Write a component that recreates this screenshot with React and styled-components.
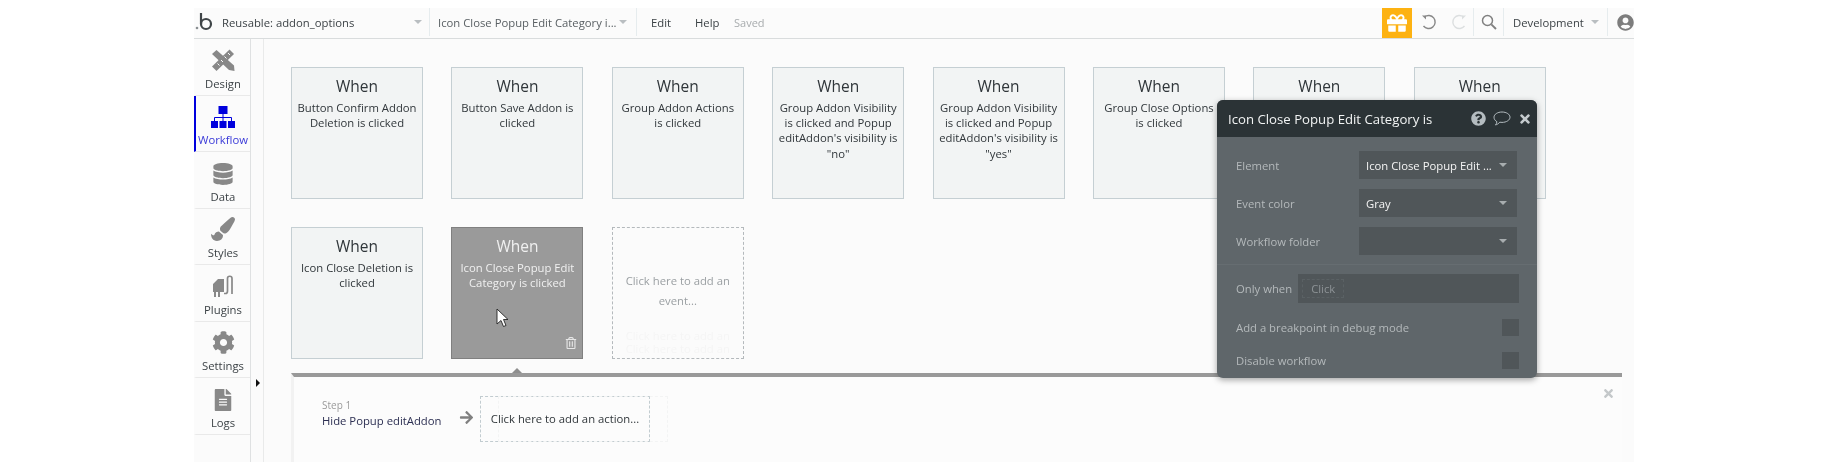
import React from 'react';
import styled, { createGlobalStyle } from 'styled-components';
import {
  FaArrowRight,
  FaCog,
  FaDatabase,
  FaFileAlt,
  FaGift,
  FaPaintBrush,
  FaQuestionCircle,
  FaRegTrashAlt,
  FaTimes,
  FaUserCircle,
} from 'react-icons/fa';

const GlobalStyle = createGlobalStyle`
  html, body {
    margin: 0;
    padding: 0;
    background: #fff;
    font-family: "Open Sans", "Noto Sans", sans-serif;
  }
`;

const events = [
  'Button Confirm Addon Deletion is clicked',
  'Button Save Addon is clicked',
  'Group Addon Actions is clicked',
  'Group Addon Visibility is clicked and Popup editAddon\'s visibility is "no"',
  'Group Addon Visibility is clicked and Popup editAddon\'s visibility is "yes"',
  'Group Close Options is clicked',
  '',
  '',
  'Icon Close Deletion is clicked',
];

const LogoIcon = () => (
  <svg width="20" height="20" viewBox="0 0 20 20">
    <circle cx="2" cy="16" r="1.3" fill="#8a8f92" />
    <path d="M6 1v11" stroke="#3f4548" strokeWidth="2.2" fill="none" />
    <circle cx="11" cy="12" r="5" stroke="#3f4548" strokeWidth="2.2" fill="none" />
  </svg>
);

const ToolsIcon = () => (
  <svg width="24" height="24" viewBox="0 0 24 24" fill="#888">
    <path d="M1 6 5.500 2 23 17.500 23.500 23 18 22z" />
    <path d="M18.500 1.500 23 6 5.500 23 1 18.500z" />
    <path d="M6.500 15.500l2 2M10 12l2 2M13.500 8.500l2 2M17 5l2 2" stroke="#fbfbfb" strokeWidth="1" />
  </svg>
);

const SitemapIcon = () => (
  <svg width="24" height="22" viewBox="0 0 24 22" fill="#0000dd">
    <rect x="7.500" y="0" width="9" height="8" />
    <rect x="0" y="15" width="7" height="7" />
    <rect x="8.500" y="15" width="7" height="7" />
    <rect x="17" y="15" width="7" height="7" />
    <path d="M12 8v7M3.500 15v-3.500h17V15" stroke="#0000dd" strokeWidth="1" fill="none" />
  </svg>
);

const PluginIcon = () => (
  <svg width="24" height="24" viewBox="0 0 24 24" fill="none">
    <path d="M2 10 7 5h6v13H9v5H7v-5H5v5H3v-5H2z" fill="#888" />
    <path d="M13 19.500h1.500c1.500 0 2-1 2-2.500V4.500c0-3 4.500-3 4.500 0V20" stroke="#888" strokeWidth="1.700" />
  </svg>
);

const UndoIcon = ({ $flip, color }) => (
  <svg
    width="16"
    height="16"
    viewBox="0 0 16 16"
    fill="none"
    style={$flip ? { transform: 'scaleX(-1)' } : undefined}
  >
    <path d="M3.500 3A6.500 6.500 0 1 1 2.500 12" stroke={color} strokeWidth="1.400" />
    <path d="M1 1.500h4v4z" fill={color} />
  </svg>
);

const SearchIcon = () => (
  <svg width="16" height="16" viewBox="0 0 16 16" fill="none" stroke="#808080">
    <circle cx="6.500" cy="6.500" r="5" strokeWidth="1.500" />
    <path d="M10.300 10.300 15 15" strokeWidth="1.900" />
  </svg>
);

const BubbleIcon = () => (
  <svg width="18" height="15" viewBox="0 0 18 15" fill="none" stroke="#b4bcc0" strokeWidth="1">
    <path d="M9 1c4.400 0 8 2.300 8 5.200s-3.600 5.200-8 5.200c-.8 0-1.500-.1-2.200-.2C5.700 12.500 4 13.600 2.500 14c.8-1 1.300-2.100 1.400-3.300C2.100 9.700 1 8 1 6.200 1 3.300 4.600 1 9 1z" />
  </svg>
);

const Cursor = styled.svg`
  position: absolute;
  left: 44px;
  top: 80px;
`;

const ArrowCursor = () => (
  <Cursor width="13" height="20" viewBox="0 0 13 20">
    <path d="M1 1v15l4-3.500 2.500 6 2.500-1-2.500-6H12z" fill="#fff" stroke="#222" strokeWidth="0.900" />
  </Cursor>
);

const App = () => (
  <Page>
    <GlobalStyle />
    <Frame>
      <TopBar>
        <Logo><LogoIcon /></Logo>
        <PageSelect>
          <BarText>Reusable: addon_options</BarText>
          <Caret />
        </PageSelect>
        <ElementSelect>
          <BarText>Icon Close Popup Edit Category i...</BarText>
          <Caret />
        </ElementSelect>
        <MenuItem $width="44px">Edit</MenuItem>
        <MenuItem $width="38px">Help</MenuItem>
        <SavedText>Saved</SavedText>
        <GiftButton><FaGift size={20} color="#fff" /></GiftButton>
        <HistoryGroup>
          <UndoIcon color="#888" />
          <UndoIcon $flip color="#dcdfe0" />
        </HistoryGroup>
        <SearchBox><SearchIcon /></SearchBox>
        <VersionSelect>
          <BarText>Development</BarText>
          <Caret />
        </VersionSelect>
        <Account><FaUserCircle size={17} color="#7d7d7d" /></Account>
      </TopBar>

      <Body>
        <Sidebar>
          <SideItem><ToolsIcon /><span>Design</span></SideItem>
          <SideItem $active><SitemapIcon /><span>Workflow</span></SideItem>
          <SideItem><FaDatabase size={22} /><span>Data</span></SideItem>
          <SideItem><FaPaintBrush size={24} /><span>Styles</span></SideItem>
          <SideItem><PluginIcon /><span>Plugins</span></SideItem>
          <SideItem><FaCog size={23} /><span>Settings</span></SideItem>
          <SideItem><FaFileAlt size={22} /><span>Logs</span></SideItem>
        </Sidebar>
        <Gutter><GutterArrow /></Gutter>

        <Canvas>
          <EventGrid>
            {events.map((text, i) => (
              <EventCard key={i}>
                <When>When</When>
                <EventText>{text}</EventText>
              </EventCard>
            ))}
            <EventCard $selected>
              <When>When</When>
              <EventText>Icon Close Popup Edit Category is clicked</EventText>
              <ArrowCursor />
              <TrashButton><FaRegTrashAlt size={12} /></TrashButton>
              <SelectedNotch />
            </EventCard>
            <AddEvent>
              Click here to add an event...
              <GhostLines>Click here to add an<br />Click here to add an</GhostLines>
            </AddEvent>
          </EventGrid>

          <ActionPanel>
            <ClosePanel><FaTimes size={13} /></ClosePanel>
            <StepInfo>
              <StepLabel>Step 1</StepLabel>
              <StepName>Hide Popup editAddon</StepName>
            </StepInfo>
            <StepArrow><FaArrowRight size={15} /></StepArrow>
            <AddAction>
              Click here to add an action...
              <GhostBox />
            </AddAction>
          </ActionPanel>
        </Canvas>
      </Body>

      <Popover>
        <PopoverHeader>
          <PopoverTitle>Icon Close Popup Edit Category is</PopoverTitle>
          <FaQuestionCircle size={15} color="#b4bcc0" />
          <BubbleIcon />
          <FaTimes size={14} color="#c4cacd" />
        </PopoverHeader>
        <PopoverFields>
          <FieldRow>
            <FieldLabel>Element</FieldLabel>
            <Select>Icon Close Popup Edit ...<DarkCaret /></Select>
          </FieldRow>
          <FieldRow>
            <FieldLabel>Event color</FieldLabel>
            <Select>Gray<DarkCaret /></Select>
          </FieldRow>
          <FieldRow>
            <FieldLabel>Workflow folder</FieldLabel>
            <Select><DarkCaret /></Select>
          </FieldRow>
        </PopoverFields>
        <PopoverOptions>
          <OnlyWhenRow>
            <FieldLabel>Only when</FieldLabel>
            <ConditionInput><ClickToken>Click</ClickToken></ConditionInput>
          </OnlyWhenRow>
          <CheckRow>
            <FieldLabel>Add a breakpoint in debug mode</FieldLabel>
            <CheckBox />
          </CheckRow>
          <CheckRow>
            <FieldLabel>Disable workflow</FieldLabel>
            <CheckBox />
          </CheckRow>
        </PopoverOptions>
      </Popover>
    </Frame>
  </Page>
);

const Page = styled.div`
  display: flex;
  justify-content: flex-start;
  padding: 8px 0 12px 194px;
`;

const Frame = styled.div`
  position: relative;
  display: flex;
  flex-direction: column;
  width: 1440px;
  height: 454px;
  background: #fbfbfb;
  color: #3c4246;
  overflow: hidden;
  filter: blur(0.25px);
`;

const TopBar = styled.div`
  display: flex;
  align-items: stretch;
  flex: 0 0 31px;
  box-sizing: border-box;
  padding-bottom: 2px;
  border-bottom: 1px solid #d9dcdd;
  font-size: 11.3px;
`;

const Logo = styled.div`
  display: flex;
  align-items: center;
  width: 28px;
  padding-left: 1px;
  box-sizing: border-box;
`;

const BarText = styled.span`
  white-space: nowrap;
`;

const PageSelect = styled.div`
  display: flex;
  align-items: center;
  justify-content: space-between;
  width: 208px;
  padding-right: 7px;
  box-sizing: border-box;
  border-right: 1px solid #e6ecee;
`;

const ElementSelect = styled.div`
  display: flex;
  align-items: center;
  justify-content: space-between;
  width: 207px;
  padding: 0 9px 0 8px;
  box-sizing: border-box;
  border-right: 1px solid #e6ecee;
  color: #5a6064;
`;

const MenuItem = styled.div`
  display: flex;
  align-items: center;
  width: ${p => p.$width};
  padding-left: 14px;
  margin-right: -14px;
`;

const SavedText = styled.div`
  display: flex;
  align-items: center;
  flex: 1;
  padding-left: 15px;
  color: #a8acae;
  font-size: 11px;
`;

const GiftButton = styled.div`
  display: flex;
  align-items: center;
  justify-content: center;
  width: 30px;
  margin-bottom: -2px;
  background: #fdb212;
`;

const HistoryGroup = styled.div`
  display: flex;
  align-items: center;
  gap: 14px;
  width: 62px;
  padding-left: 9px;
  box-sizing: border-box;
  border-right: 1px solid #e6ecee;
`;

const SearchBox = styled.div`
  display: flex;
  align-items: center;
  justify-content: center;
  width: 29px;
  border-right: 1px solid #e6ecee;
`;

const VersionSelect = styled.div`
  display: flex;
  align-items: center;
  justify-content: space-between;
  width: 104px;
  padding: 0 8px 0 9px;
  box-sizing: border-box;
  border-right: 1px solid #e6ecee;
`;

const Account = styled.div`
  display: flex;
  align-items: center;
  justify-content: flex-end;
  width: 26px;
`;

const Caret = styled.span`
  flex: none;
  width: 0;
  height: 0;
  border-left: 4px solid transparent;
  border-right: 4px solid transparent;
  border-top: 4px solid #b9bec1;
`;

const Body = styled.div`
  display: flex;
  flex: 1;
  min-height: 0;
`;

const Sidebar = styled.div`
  display: flex;
  flex-direction: column;
  flex: 0 0 56px;
  box-sizing: border-box;
`;

const SideItem = styled.div`
  display: flex;
  flex-direction: column;
  align-items: center;
  justify-content: flex-end;
  gap: 4px;
  flex: 0 0 56.5px;
  box-sizing: border-box;
  padding-bottom: 3px;
  border-bottom: 1px solid #e9e9e9;
  border-left: 2px solid ${p => (p.$active ? '#0000dd' : 'transparent')};
  font-size: 11.3px;
  line-height: 16px;
  color: ${p => (p.$active ? '#3a3ad8' : '#3c4246')};

  svg {
    color: #888;
  }
`;

const Gutter = styled.div`
  position: relative;
  flex: 0 0 14px;
  box-sizing: border-box;
  border-left: 1px solid #dfe1e2;
  border-right: 1px solid #e9eaea;
`;

const GutterArrow = styled.span`
  position: absolute;
  left: 5px;
  top: 340px;
  width: 0;
  height: 0;
  border-top: 4px solid transparent;
  border-bottom: 4px solid transparent;
  border-left: 4px solid #111;
`;

const Canvas = styled.div`
  display: flex;
  flex-direction: column;
  flex: 1;
  min-width: 0;
`;

const EventGrid = styled.div`
  display: grid;
  grid-template-columns: repeat(8, 132px);
  grid-auto-rows: 132px;
  column-gap: 28.4px;
  row-gap: 28px;
  padding: 28px 0 14px 27px;
`;

const EventCard = styled.div`
  position: relative;
  box-sizing: border-box;
  padding: 8px 5px 0;
  text-align: center;
  background: ${p => (p.$selected ? '#9a9a9a' : '#f2f4f4')};
  border: 1px solid ${p => (p.$selected ? '#808080' : '#c5cfd3')};
  color: ${p => (p.$selected ? '#f0f0f0' : '#30363a')};
`;

const When = styled.div`
  font-size: 15.5px;
  line-height: 21px;
  margin-bottom: 3px;
`;

const EventText = styled.div`
  font-size: 11.3px;
  line-height: 15.2px;
`;

const TrashButton = styled.span`
  position: absolute;
  right: 5px;
  bottom: 4px;
  color: #e6e6e6;
`;

const SelectedNotch = styled.span`
  position: absolute;
  left: 60px;
  bottom: -15px;
  width: 0;
  height: 0;
  border-left: 5px solid transparent;
  border-right: 5px solid transparent;
  border-bottom: 5px solid #8e8e8e;
`;

const AddEvent = styled.div`
  position: relative;
  display: flex;
  align-items: center;
  justify-content: center;
  box-sizing: border-box;
  padding: 0 10px 4px;
  text-align: center;
  font-size: 11.3px;
  line-height: 20px;
  color: #9a9fa2;
  border: 1px dashed #b4b9bc;
`;

const GhostLines = styled.div`
  position: absolute;
  left: 8px;
  right: 8px;
  bottom: 3px;
  line-height: 13px;
  color: #f5f5f5;
  white-space: nowrap;
`;

const ActionPanel = styled.div`
  position: relative;
  flex: 1;
  display: flex;
  align-items: flex-start;
  margin: 0 12px 0 27px;
  padding: 19px 0 0 28px;
  background: #fcfcfc;
  border-top: 4px solid #999;
  border-left: 3px solid #f2f2f2;
`;

const ClosePanel = styled.span`
  position: absolute;
  top: 6px;
  right: 7px;
  color: #c4c8ca;
`;

const StepInfo = styled.div`
  display: flex;
  flex-direction: column;
  width: 137px;
  margin-top: 3px;
`;

const StepLabel = styled.div`
  font-size: 10px;
  line-height: 13px;
  color: #9a9a9a;
`;

const StepName = styled.div`
  font-size: 11.3px;
  line-height: 17px;
  color: #2c2f52;
  white-space: nowrap;
`;

const StepArrow = styled.span`
  margin: 12px 6px 0 0;
  color: #808080;
`;

const AddAction = styled.div`
  position: relative;
  display: flex;
  align-items: center;
  justify-content: center;
  box-sizing: border-box;
  width: 170px;
  height: 46px;
  padding-bottom: 2px;
  font-size: 11.3px;
  white-space: nowrap;
  color: #30363a;
  border: 1px dashed #c2ccd0;
`;

const GhostBox = styled.span`
  position: absolute;
  top: -1px;
  left: 17px;
  width: 168px;
  height: 44px;
  border: 1px dashed #f3f4f4;
`;

const Popover = styled.div`
  position: absolute;
  left: 1023px;
  top: 92px;
  width: 320px;
  height: 278px;
  border-radius: 6px;
  overflow: hidden;
  background: #5f666a;
  box-shadow: 0 2px 6px rgba(0, 0, 0, 0.35);
  color: #b4b9bb;
  font-size: 11.3px;
`;

const PopoverHeader = styled.div`
  display: flex;
  align-items: center;
  gap: 7px;
  height: 37px;
  padding: 0 5px 0 11px;
  background: #2b3336;
`;

const PopoverTitle = styled.div`
  flex: 1;
  font-size: 13.2px;
  color: #f2f4f4;
  white-space: nowrap;
`;

const PopoverFields = styled.div`
  display: flex;
  flex-direction: column;
  gap: 10px;
  padding: 14px 20px 9px 19px;
  border-bottom: 1px solid #666d71;
`;

const FieldRow = styled.div`
  display: flex;
  align-items: center;
  justify-content: space-between;
  height: 28px;
`;

const FieldLabel = styled.span`
  white-space: nowrap;
`;

const Select = styled.div`
  display: flex;
  align-items: center;
  justify-content: space-between;
  box-sizing: border-box;
  width: 158px;
  height: 28px;
  padding: 0 10px 0 7px;
  background: #505659;
  color: #f4f4f4;
  font-size: 11.3px;
  white-space: nowrap;
`;

const DarkCaret = styled(Caret)`
  margin-left: auto;
  border-top-color: #a8adaf;
`;

const PopoverOptions = styled.div`
  display: flex;
  flex-direction: column;
  padding: 9px 18px 0 19px;
`;

const OnlyWhenRow = styled.div`
  display: flex;
  align-items: center;
  gap: 6px;
  height: 29px;
  margin-bottom: 16px;
`;

const ConditionInput = styled.div`
  flex: 1;
  display: flex;
  align-items: center;
  height: 29px;
  padding-left: 4px;
  background: #505659;
`;

const ClickToken = styled.span`
  padding: 1px 8px;
  border: 1px dashed #5a6164;
  color: #8d9396;
`;

const CheckRow = styled.div`
  display: flex;
  align-items: center;
  justify-content: space-between;
  height: 17px;
  margin-bottom: 16px;
`;

const CheckBox = styled.span`
  width: 17px;
  height: 17px;
  background: #505659;
`;

export default App;
